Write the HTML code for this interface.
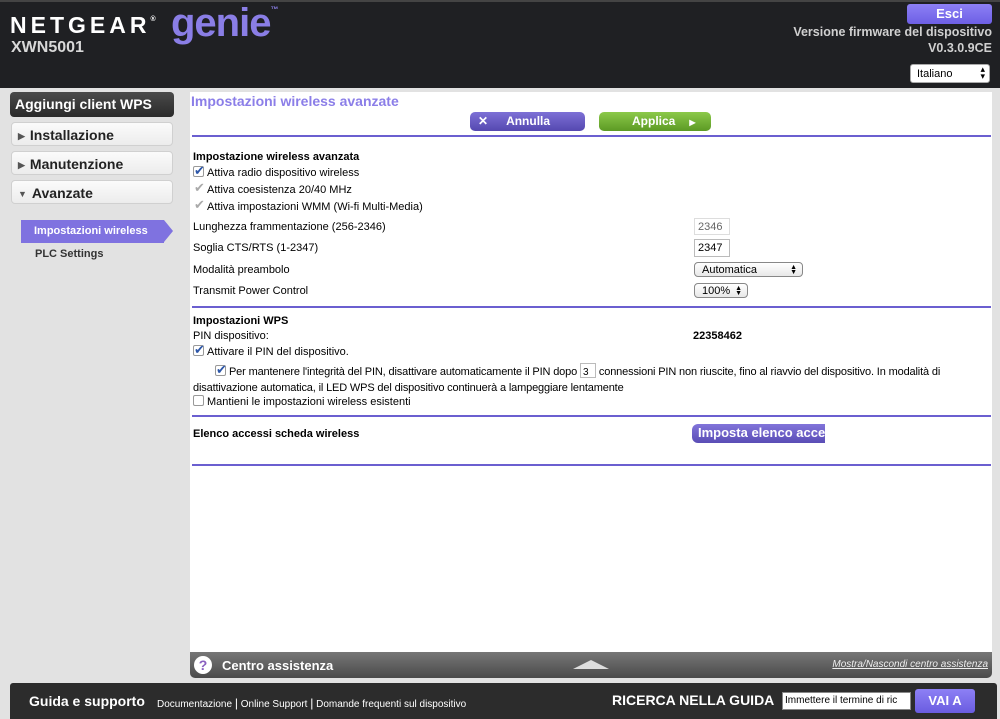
<!DOCTYPE html>
<html><head><meta charset="utf-8"><style>
*{margin:0;padding:0;box-sizing:border-box}
body{width:1000px;height:719px;overflow:hidden;background:#e2e2e2;font-family:"Liberation Sans",sans-serif;position:relative;font-size:11px;color:#000}
.a{position:absolute}
#hdr{left:0;top:0;width:1000px;height:88px;background:#1f2023;border-top:2px solid #444}
.b{font-weight:bold}
.side{left:11px;width:162px;height:24px;border-radius:4px;background:linear-gradient(#fbfbfb,#ececec);border:1px solid #d0d0d0;font-weight:bold;font-size:14px;color:#222;padding:4px 0 0 6px}
.side i{font-style:normal;font-size:9px;color:#555;margin-right:5px;vertical-align:1px}
.hr{left:192px;width:799px;height:2px;background:#6b5fd0}
.t{left:193px;font-size:11px}
.cb{display:inline-block;width:11px;height:11px;border:1px solid #999;border-radius:2px;background:#fff;margin-right:3px;vertical-align:-1px;position:relative}
.cb.k::after{content:"✔";position:absolute;left:0;top:-4px;font-size:13px;color:#2c56a8}
.cb.g::after{content:"✔";position:absolute;left:0;top:-4px;font-size:13px;color:#aaa}
.cb.g{border-color:transparent;background:none}
.inp{border:1px solid #bbb;background:#fff;font-size:11px;padding:2px 3px}
.sel{border:1px solid #888;border-radius:4px;background:linear-gradient(#fff,#e8e8e8);font-size:11px;padding:1px 7px}
</style></head><body>
<div id="hdr" class="a">
 <div class="a b" style="left:10px;top:10px;font-size:23px;color:#fff;letter-spacing:4px">NETGEAR<span style="font-size:7px;vertical-align:12px;letter-spacing:0">®</span></div>
 <div class="a b" style="left:171px;top:-1px;font-size:40px;color:#8a7ee6;letter-spacing:-1px">genie<span style="font-size:8px;vertical-align:24px;letter-spacing:0">™</span></div>
 <div class="a b" style="left:11px;top:37px;font-size:16px;color:#d8d8d8">XWN5001</div>
 <div class="a b" style="left:907px;top:2px;width:85px;height:20px;border-radius:3px;background:linear-gradient(#8d80f5,#6d5fe5);color:#fff;font-size:13px;text-align:center;line-height:19px">Esci</div>
 <div class="a b" style="right:8px;top:22px;font-size:12.5px;color:#d0d0d0;text-align:right;line-height:16px">Versione firmware del dispositivo<br>V0.3.0.9CE</div>
 <div class="a" style="left:910px;top:62px;width:80px;height:19px;background:#fff;border-radius:3px;border:1px solid #aaa;font-size:11px;padding:3px 6px">Italiano<span style="position:absolute;right:4px;top:1px;font-size:9px;line-height:7px">▴<br>▾</span></div>
</div>
<div class="a b" style="left:10px;top:92px;width:164px;height:25px;border-radius:4px;background:linear-gradient(#4a4a4a,#2a2a2a);color:#fff;font-size:14px;padding:4px 0 0 5px">Aggiungi client WPS</div>
<div class="a side" style="top:122px"><i>▶</i>Installazione</div>
<div class="a side" style="top:151px"><i>▶</i>Manutenzione</div>
<div class="a side" style="top:180px"><i>▼</i>Avanzate</div>
<div class="a b" style="left:21px;top:220px;width:143px;height:23px;background:#7f72e0;color:#fff;font-size:11px;padding:5px 0 0 13px">Impostazioni wireless</div>
<div class="a" style="left:164px;top:220px;width:0;height:0;border-top:11.5px solid transparent;border-bottom:11.5px solid transparent;border-left:9px solid #7f72e0"></div>
<div class="a b" style="left:35px;top:248px;font-size:11px;color:#333">PLC Settings</div>

<div class="a" style="left:190px;top:92px;width:802px;height:561px;background:#fff"></div>
<div class="a b" style="left:191px;top:93px;font-size:14px;color:#8b7ee8">Impostazioni wireless avanzate</div>
<div class="a b" style="left:470px;top:112px;width:115px;height:19px;border-radius:5px;background:linear-gradient(#7d70d6,#5548b0);color:#fff;font-size:12px;line-height:18px"><span style="margin-left:8px">✕</span><span style="margin-left:18px">Annulla</span></div>
<div class="a b" style="left:599px;top:112px;width:112px;height:19px;border-radius:5px;background:linear-gradient(#8cc94a,#5c9a24);color:#fff;font-size:12px;line-height:18px"><span style="margin-left:33px">Applica</span><span style="margin-left:14px;font-size:8px">▶</span></div>
<div class="a hr" style="top:135px"></div>
<div class="a t b" style="top:151px">Impostazione wireless avanzata</div>
<div class="a t" style="top:166px"><span class="cb k"></span>Attiva radio dispositivo wireless</div>
<div class="a t" style="top:183px"><span class="cb g"></span>Attiva coesistenza 20/40 MHz</div>
<div class="a t" style="top:200px"><span class="cb g"></span>Attiva impostazioni WMM (Wi-fi Multi-Media)</div>
<div class="a t" style="top:221px">Lunghezza frammentazione (256-2346)</div>
<div class="a inp" style="left:694px;top:218px;width:36px;height:17px;color:#666;border-color:#ddd">2346</div>
<div class="a t" style="top:242px">Soglia CTS/RTS (1-2347)</div>
<div class="a inp" style="left:694px;top:239px;width:36px;height:18px">2347</div>
<div class="a t" style="top:264px">Modalità preambolo</div>
<div class="a sel" style="left:694px;top:262px;width:109px;height:15px">Automatica<span style="position:absolute;right:5px;top:2px;font-size:7px;line-height:5px">▲<br>▼</span></div>
<div class="a t" style="top:285px">Transmit Power Control</div>
<div class="a sel" style="left:694px;top:283px;width:54px;height:15px">100%<span style="position:absolute;right:5px;top:2px;font-size:7px;line-height:5px">▲<br>▼</span></div>
<div class="a hr" style="top:306px"></div>
<div class="a t b" style="top:315px">Impostazioni WPS</div>
<div class="a t" style="top:330px">PIN dispositivo:</div>
<div class="a b" style="left:693px;top:330px">22358462</div>
<div class="a t" style="top:345px"><span class="cb k"></span>Attivare il PIN del dispositivo.</div>
<div class="a t" style="top:363px;width:800px;line-height:16px;white-space:nowrap;letter-spacing:-0.15px"><span style="margin-left:22px" class="cb k"></span>Per mantenere l'integrità del PIN, disattivare automaticamente il PIN dopo <span class="inp" style="display:inline-block;width:16px;height:15px;padding:1px 2px;font-size:10px;vertical-align:0">3</span> connessioni PIN non riuscite, fino al riavvio del dispositivo. In modalità di<br>disattivazione automatica, il LED WPS del dispositivo continuerà a lampeggiare lentamente</div>
<div class="a t" style="top:395px"><span class="cb"></span>Mantieni le impostazioni wireless esistenti</div>
<div class="a hr" style="top:415px"></div>
<div class="a t b" style="top:428px">Elenco accessi scheda wireless</div>
<div class="a b" style="left:692px;top:424px;width:133px;height:19px;border-radius:6px 0 0 6px;background:linear-gradient(#8174da,#5a4db5);color:#fff;font-size:13px;line-height:18px;padding-left:6px;overflow:hidden;white-space:nowrap">Imposta elenco accesso</div>
<div class="a hr" style="top:464px"></div>

<div class="a" style="left:190px;top:652px;width:802px;height:26px;border-radius:0 0 5px 5px;background:linear-gradient(#777,#4a4a4a)"></div>
<div class="a b" style="left:194px;top:656px;width:18px;height:18px;border-radius:50%;background:#fff;color:#8a60c0;font-size:14px;text-align:center;line-height:18px">?</div>
<div class="a b" style="left:222px;top:658px;color:#fff;font-size:13px">Centro assistenza</div>
<div class="a" style="left:573px;top:660px;width:0;height:0;border-left:18px solid transparent;border-right:18px solid transparent;border-bottom:9px solid #ddd"></div>
<div class="a" style="right:12px;top:659px;color:#eee;font-size:10px;font-style:italic;text-decoration:underline">Mostra/Nascondi centro assistenza</div>

<div class="a" style="left:10px;top:683px;width:987px;height:36px;background:#2c2c2c;border-radius:3px 3px 0 0"></div>
<div class="a b" style="left:29px;top:693px;color:#fff;font-size:14px">Guida e supporto</div>
<div class="a" style="left:157px;top:696px;color:#fff;font-size:10px">Documentazione <span style="font-size:12px">|</span> Online Support <span style="font-size:12px">|</span> Domande frequenti sul dispositivo</div>
<div class="a b" style="left:612px;top:692px;color:#fff;font-size:14px">RICERCA NELLA GUIDA</div>
<div class="a" style="left:782px;top:692px;width:129px;height:18px;background:#fff;border:1px solid #888;font-size:10px;padding:2px 2px;white-space:nowrap;overflow:hidden">Immettere il termine di ric</div>
<div class="a b" style="left:915px;top:689px;width:60px;height:24px;border-radius:3px;background:linear-gradient(#8d80f5,#6a5ce0);color:#fff;font-size:13px;text-align:center;line-height:24px">VAI A</div>
</body></html>
